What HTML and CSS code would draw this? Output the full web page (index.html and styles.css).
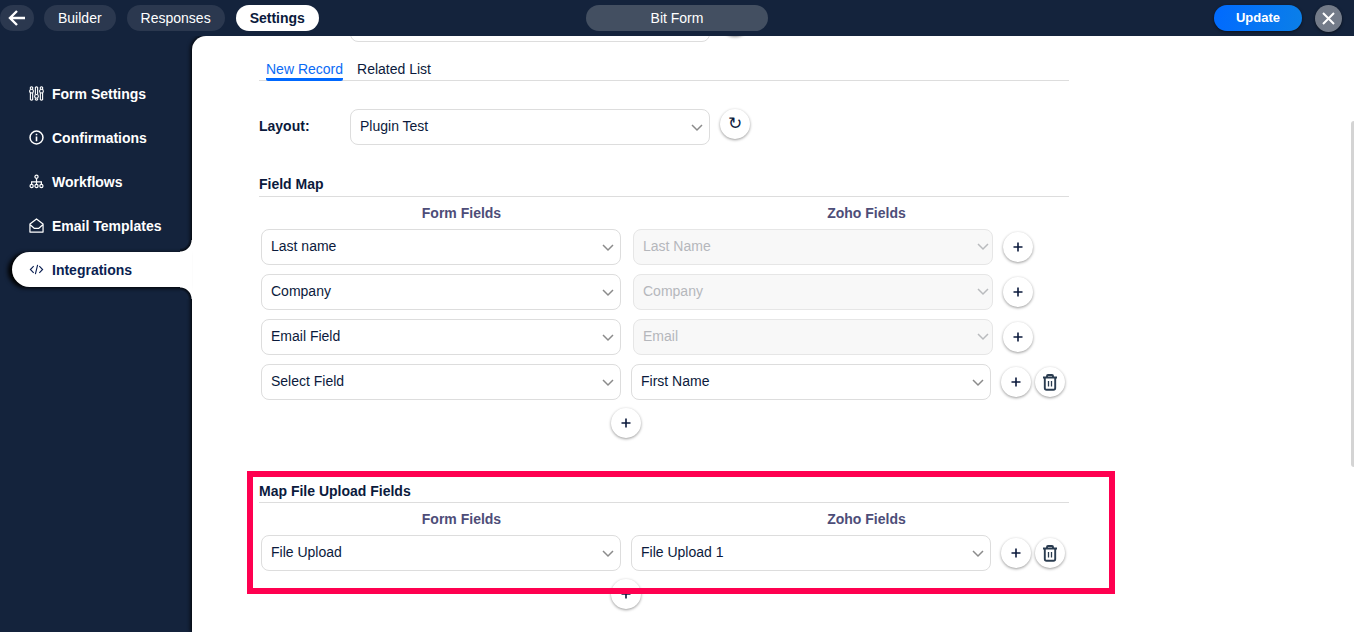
FILE: index.html
```html
<!DOCTYPE html>
<html lang="en">
<head>
<meta charset="utf-8">
<title>Bit Form - Integrations</title>
<link rel="stylesheet" href="styles.css">
</head>
<body>
<svg class="defs" aria-hidden="true">
  <symbol id="chevron" viewBox="0 0 12 8"><path d="M1 1l5 5 5-5" fill="none" stroke="currentColor" stroke-width="1.5"/></symbol>
  <symbol id="plus" viewBox="0 0 10 10"><path d="M5 .5v9M.5 5h9" fill="none" stroke="currentColor" stroke-width="1.6"/></symbol>
  <symbol id="trash" viewBox="0 0 16 18"><path d="M1 4.500h14M5 4.500V3q0-1 1-1h4q1 0 1 1v1.500M2.800 4.500V15q0 1.800 1.800 1.800h6.800q1.800 0 1.800-1.800V4.500" fill="none" stroke="currentColor" stroke-width="1.900"/><path d="M6.500 8v5.500M9.500 8v5.500" stroke="currentColor" stroke-width="1.300"/></symbol>
</svg>
<header class="topbar">
  <nav class="topnav">
    <button class="back" aria-label="Back"><svg width="18" height="16" viewBox="0 0 18 16"><path d="M17 8H2.500M9 1L2 8l7 7" fill="none" stroke="currentColor" stroke-width="2.400"/></svg></button>
    <a class="pill" href="#">Builder</a>
    <a class="pill" href="#">Responses</a>
    <a class="pill pill-active" href="#">Settings</a>
  </nav>
  <input class="form-name" aria-label="Form name" value="Bit Form">
  <div class="actions">
    <button class="update">Update</button>
    <button class="close" aria-label="Close"><svg width="13" height="13" viewBox="0 0 13 13"><path d="M1 1l11 11M12 1L1 12" stroke="currentColor" stroke-width="2"/></svg></button>
  </div>
</header>
<div class="workspace">
  <nav class="sidebar">
    <a class="side-link" href="#"><svg viewBox="0 0 16 16"><g fill="none" stroke="currentColor" stroke-width="1.200"><path d="M1.500 3.500v-2q1.200-1.500 2.400 0v2M1.500 7.500v7q1.200 1.200 2.400 0v-7M6.800 9V1.500q1.200-1.200 2.400 0V9M6.800 13v1.500q1.200 1.200 2.400 0V13M12.100 3.500v-2q1.200-1.500 2.400 0v2M12.100 7.500v7q1.200 1.200 2.400 0v-7"/><circle cx="2.700" cy="5.500" r="2"/><circle cx="8" cy="11" r="2"/><circle cx="13.300" cy="5.500" r="2"/></g></svg>Form Settings</a>
    <a class="side-link" href="#"><svg viewBox="0 0 16 16"><circle cx="8" cy="8" r="6.900" fill="none" stroke="currentColor" stroke-width="1.600"/><path d="M8 7v5M8 4v1.600" stroke="currentColor" stroke-width="1.700"/></svg>Confirmations</a>
    <a class="side-link" href="#"><svg viewBox="0 0 16 16"><g fill="none" stroke="currentColor" stroke-width="1.300"><circle cx="8" cy="3" r="1.700"/><path d="M8 5v6M2.800 11V8.500h10.400V11"/><circle cx="2.800" cy="12.800" r="1.700"/><circle cx="8" cy="12.800" r="1.700"/><circle cx="13.200" cy="12.800" r="1.700"/></g></svg>Workflows</a>
    <a class="side-link" href="#"><svg viewBox="0 0 16 16"><path d="M1 6.500L8 1l7 5.500V15H1zM1 7l4.500 4h5L15 7" fill="none" stroke="currentColor" stroke-width="1.300" stroke-linejoin="round"/></svg>Email Templates</a>
    <a class="side-link side-link-active" href="#"><svg viewBox="0 0 16 16"><path d="M5 4.500L1.500 8 5 11.500M11 4.500L14.500 8 11 11.500M9.200 3L6.800 13" fill="none" stroke="currentColor" stroke-width="1.200"/></svg>Integrations</a>
  </nav>
  <main class="panel">
    <div class="content">
      <div class="setting setting-module">
        <span class="picker"><select aria-label="Module"><option></option></select></span>
        <button class="round" aria-label="Refresh modules"></button>
      </div>
      <div class="tabs">
        <button class="tab tab-active">New Record</button>
        <button class="tab">Related List</button>
      </div>
      <div class="setting">
        <label for="layout">Layout:</label>
        <span class="picker"><select id="layout"><option>Plugin Test</option></select><svg><use href="#chevron"/></svg></span>
        <button class="round" aria-label="Refresh layouts">↻</button>
      </div>
      <section class="map">
        <h2>Field Map</h2>
        <div class="columns"><span>Form Fields</span><span>Zoho Fields</span></div>
        <div class="rows">
          <div class="row row-required">
            <span class="picker"><select aria-label="Form field"><option>Last name</option></select><svg><use href="#chevron"/></svg></span>
            <span class="picker"><select aria-label="Zoho field" disabled><option>Last Name</option></select><svg><use href="#chevron"/></svg></span>
            <div class="row-actions"><button class="round" aria-label="Add row"><svg class="plus"><use href="#plus"/></svg></button></div>
          </div>
          <div class="row row-required">
            <span class="picker"><select aria-label="Form field"><option>Company</option></select><svg><use href="#chevron"/></svg></span>
            <span class="picker"><select aria-label="Zoho field" disabled><option>Company</option></select><svg><use href="#chevron"/></svg></span>
            <div class="row-actions"><button class="round" aria-label="Add row"><svg class="plus"><use href="#plus"/></svg></button></div>
          </div>
          <div class="row row-required">
            <span class="picker"><select aria-label="Form field"><option>Email Field</option></select><svg><use href="#chevron"/></svg></span>
            <span class="picker"><select aria-label="Zoho field" disabled><option>Email</option></select><svg><use href="#chevron"/></svg></span>
            <div class="row-actions"><button class="round" aria-label="Add row"><svg class="plus"><use href="#plus"/></svg></button></div>
          </div>
          <div class="row">
            <span class="picker"><select aria-label="Form field"><option>Select Field</option></select><svg><use href="#chevron"/></svg></span>
            <span class="picker"><select aria-label="Zoho field"><option>First Name</option></select><svg><use href="#chevron"/></svg></span>
            <div class="row-actions"><button class="round" aria-label="Add row"><svg class="plus"><use href="#plus"/></svg></button><button class="round" aria-label="Delete row"><svg class="trash"><use href="#trash"/></svg></button></div>
          </div>
        </div>
        <div class="add"><button class="round" aria-label="Add field"><svg class="plus"><use href="#plus"/></svg></button></div>
      </section>
      <section class="map map-files">
        <h2>Map File Upload Fields</h2>
        <div class="columns"><span>Form Fields</span><span>Zoho Fields</span></div>
        <div class="rows">
          <div class="row">
            <span class="picker"><select aria-label="Form field"><option>File Upload</option></select><svg><use href="#chevron"/></svg></span>
            <span class="picker"><select aria-label="Zoho field"><option>File Upload 1</option></select><svg><use href="#chevron"/></svg></span>
            <div class="row-actions"><button class="round" aria-label="Add row"><svg class="plus"><use href="#plus"/></svg></button><button class="round" aria-label="Delete row"><svg class="trash"><use href="#trash"/></svg></button></div>
          </div>
        </div>
        <div class="add"><button class="round" aria-label="Add field"><svg class="plus"><use href="#plus"/></svg></button></div>
        <div class="highlight"></div>
      </section>
    </div>
    <div class="scroll-thumb"></div>
  </main>
</div>
</body>
</html>
```

FILE: styles.css
```css
* { box-sizing: border-box; }
body {
  margin: 0;
  height: 100vh;
  display: flex;
  flex-direction: column;
  overflow: hidden;
  background: #14233c;
  color: #0b1a3c;
  font: 14px/18px "Liberation Sans", Arial, sans-serif;
}
button, input, select { font: inherit; color: inherit; border: 0; margin: 0; padding: 0; }
button { background: none; cursor: pointer; }
a { color: inherit; text-decoration: none; }
.defs { position: absolute; width: 0; height: 0; }

/* Top bar */
.topbar {
  flex: none;
  height: 36px;
  display: grid;
  grid-template-columns: 1fr auto 1fr;
  align-items: center;
  color: #fff;
}
.topnav { display: flex; gap: 11px; }
.back, .pill {
  height: 26px;
  display: flex;
  align-items: center;
  justify-content: center;
  border-radius: 13px;
  background: #2b384f;
}
.back { width: 34px; margin-right: -1px; border-radius: 0 13px 13px 0; }
.back { border-radius: 13px; }
.pill { padding: 0 14px; }
.pill-active { background: #fff; color: #0b1a3c; font-weight: bold; }
.form-name {
  width: 182px;
  height: 26px;
  border-radius: 13px;
  background: #434f61;
  text-align: center;
}
.actions { display: flex; align-items: center; justify-content: flex-end; gap: 13px; padding-right: 12px; }
.update {
  width: 88px;
  height: 26px;
  border-radius: 13px;
  background: linear-gradient(100deg, #006aff, #0b7fe8);
  box-shadow: 0 1px 3px #0008;
  font-size: 13px;
  font-weight: bold;
}
.close {
  width: 27px;
  height: 27px;
  display: grid;
  place-items: center;
  border-radius: 50%;
  background: #737b89;
  box-shadow: 0 1px 3px #0008;
}

/* Sidebar */
.workspace { flex: 1; min-height: 0; display: flex; }
.sidebar {
  flex: none;
  width: 192px;
  display: flex;
  flex-direction: column;
  gap: 9px;
  padding: 40px 0 0 12px;
  color: #fff;
  font-weight: bold;
}
.side-link { height: 35px; display: flex; align-items: center; gap: 8px; padding-left: 17px; }
.side-link svg { width: 15px; height: 15px; }
.side-link-active {
  position: relative;
  z-index: 1;
  border-radius: 18px 0 0 18px;
  background: #fff;
  color: #0b1f52;
  box-shadow: -4px 1px 4px #000;
}
.side-link-active::before, .side-link-active::after {
  content: "";
  position: absolute;
  right: 0;
  width: 12px;
  height: 12px;
}
.side-link-active::before { bottom: 100%; background: radial-gradient(circle at 0 0, #14233c 8px, #060c16 11px, #fff 12px); }
.side-link-active::after { top: 100%; background: radial-gradient(circle at 0 100%, #14233c 8px, #060c16 11px, #fff 12px); }

/* Main panel */
.panel {
  position: relative;
  flex: 1;
  min-width: 0;
  padding: 0 24px 0 67px;
  border-radius: 14px 0 0 0;
  background: #fff;
  box-shadow: -1px 0 4px #000;
  clip-path: inset(0 0 0 -10px);
}
.content { max-width: 810px; }
.scroll-thumb {
  position: absolute;
  top: 85px;
  right: 0;
  width: 3px;
  height: 346px;
  border-radius: 3px 0 0 3px;
  background: #d4d4d4;
}
.setting { display: flex; gap: 10px; margin-top: 28px; }
.setting label { width: 81px; font-weight: bold; padding-top: 8px; }
.setting .picker { flex: 0 1 360px; }
.setting-module { margin-top: -30px; padding-left: 91px; }

.picker { position: relative; flex: 1; min-width: 0; }
.picker select {
  appearance: none;
  width: 100%;
  height: 36px;
  padding: 0 28px 2px 9px;
  border: 1px solid #ddd;
  border-radius: 8px;
  background: #fff;
  display: block;
}
.picker select:disabled { background: #f8f8f8; border-color: #e6e6e6; color: #b5b7bc; opacity: 1; }
.picker svg {
  position: absolute;
  right: 7px;
  top: 15px;
  width: 12px;
  height: 8px;
  color: #8b8b8b;
  pointer-events: none;
}
.picker select:disabled + svg { right: 4px; top: 14px; color: #b9bbbe; }

.round {
  flex: none;
  width: 30px;
  height: 30px;
  display: grid;
  place-items: center;
  border-radius: 50%;
  background: #fff;
  box-shadow: 0 1px 3px #0006;
  font-size: 17px;
}
.plus { width: 10px; height: 10px; }
.trash { width: 16px; height: 18px; color: #2a3c50; }

.tabs { display: flex; gap: 14px; margin-top: 17px; padding-left: 7px; border-bottom: 1px solid #ddd; }
.tab { height: 22px; padding: 0; margin-bottom: -1px; border-bottom: 3px solid transparent; }
.tab-active { color: #0a6bf5; border-color: #0068ff; border-radius: 2px; }

.map { position: relative; margin-top: 30px; }
.map-files { margin-top: 44px; }
.map h2 { margin: 0; padding-bottom: 3px; border-bottom: 1px solid #ddd; font-size: 14px; }
.map-files h2 { padding-bottom: 2px; }
.columns { display: grid; grid-template-columns: 1fr 1fr; padding: 7px 0; text-align: center; color: #4d4d78; font-weight: bold; }
.rows { display: grid; gap: 9px; padding-left: 2px; }
.row { display: flex; align-items: center; gap: 10px; }
.row-actions { flex: none; width: 68px; display: flex; gap: 4px; }
.row-required { gap: 12px; }
.row-required .row-actions { width: 66px; margin-left: -2px; }
.add { display: flex; justify-content: center; padding: 8px 76px 0 0; }
.highlight {
  position: absolute;
  inset: -11px -46px 15px -12px;
  border: 6px solid #ff0050;
  pointer-events: none;
}
```
